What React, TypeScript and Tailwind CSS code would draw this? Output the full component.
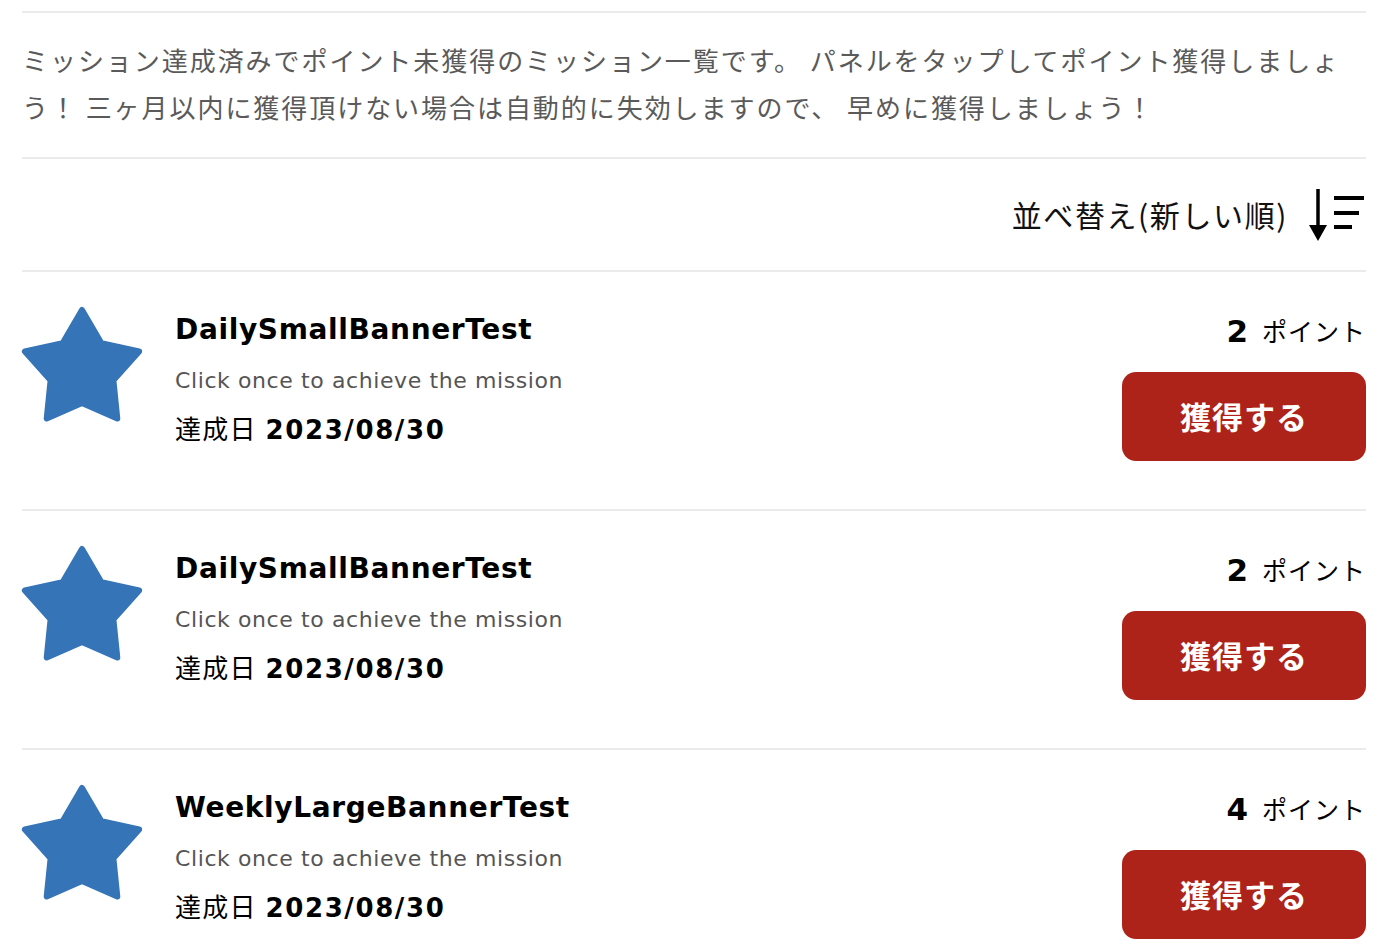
import React from 'react';

type Mission = {
  title: string;
  description: string;
  date: string;
  points: number;
};

const missions: Mission[] = [
  { title: 'DailySmallBannerTest', description: 'Click once to achieve the mission', date: '2023/08/30', points: 2 },
  { title: 'DailySmallBannerTest', description: 'Click once to achieve the mission', date: '2023/08/30', points: 2 },
  { title: 'WeeklyLargeBannerTest', description: 'Click once to achieve the mission', date: '2023/08/30', points: 4 },
];

const latin = "font-['DejaVu_Sans','Noto_Sans_CJK_JP',sans-serif]";
const jp = "font-['Noto_Sans_CJK_JP',sans-serif]";

const Star: React.FC = () => (
  <svg width="120" height="116" viewBox="0 0 120 116" className="shrink-0 overflow-visible">
    <polygon
      points="60,3 79.4,36.3 117.1,44.5 91.4,73.2 95.3,111.5 60,96 24.7,111.5 28.6,73.2 2.9,44.5 40.6,36.3"
      fill="#3574b7"
      stroke="#3574b7"
      strokeWidth="6"
      strokeLinejoin="round"
    />
  </svg>
);

const SortIcon: React.FC = () => (
  <svg width="58" height="54" viewBox="0 0 58 54" className="shrink-0">
    <line x1="10" y1="1" x2="10" y2="42" stroke="#000" strokeWidth="3.5" />
    <polygon points="1,37 19,37 10,53" fill="#000" />
    <line x1="26" y1="10" x2="56" y2="10" stroke="#000" strokeWidth="4" />
    <line x1="26" y1="25" x2="51" y2="25" stroke="#000" strokeWidth="4" />
    <line x1="26" y1="39" x2="44" y2="39" stroke="#000" strokeWidth="4" />
  </svg>
);

const MissionRow: React.FC<{ mission: Mission }> = ({ mission }) => (
  <div className="border-t-2 border-[#ebebeb] pt-[35px] pb-[48px] flex items-start">
    <Star />
    <div className="ml-[33px] flex-1 min-w-0">
      <div className={`${latin} text-[28px] font-bold leading-[46px] text-black tracking-[0.65px]`}>
        {mission.title}
      </div>
      <div className={`${latin} text-[22px] leading-[56px] text-[#555] tracking-[0.6px]`}>
        {mission.description}
      </div>
      <div className="leading-[38px] text-black">
        <span className={`${jp} text-[26px] tracking-[1.2px]`}>達成日</span>
        <span className={`${latin} text-[26px] font-bold ml-[9px] tracking-[1.6px]`}>{mission.date}</span>
      </div>
    </div>
    <div className="flex flex-col items-end">
      <div className="h-[48px] flex items-center">
        <span className={`${latin} text-[31px] font-bold text-black`}>{mission.points}</span>
        <span className={`${jp} text-[25px] ml-[14px] tracking-[1px] text-black`}>ポイント</span>
      </div>
      <button
        className={`${jp} mt-[17px] w-[244px] h-[89px] rounded-[14px] bg-[#ad2319] text-white text-[31px] font-bold tracking-[1px]`}
      >
        獲得する
      </button>
    </div>
  </div>
);

const App: React.FC = () => {
  return (
    <div className="min-h-screen bg-white pt-[11px] px-[22px]">
      <div className="border-t-2 border-[#ebebeb] pt-[23px] pb-[27px]">
        <p className={`${jp} text-[26px] leading-[47px] text-[#5a5a5a] tracking-[1.95px]`}>
          ミッション達成済みでポイント未獲得のミッション一覧です。 パネルをタップしてポイント獲得しましょう！ 三ヶ月以内に獲得頂けない場合は自動的に失効しますので、 早めに獲得しましょう！
        </p>
      </div>
      <div className="border-t-2 border-[#ebebeb] h-[113px] flex items-center justify-end">
        <span className={`${jp} text-[30px] text-[#111] mr-[20px] tracking-[1.6px]`}>並べ替え(新しい順)</span>
        <SortIcon />
      </div>
      {missions.map((m, i) => (
        <MissionRow key={i} mission={m} />
      ))}
    </div>
  );
};

export default App;
